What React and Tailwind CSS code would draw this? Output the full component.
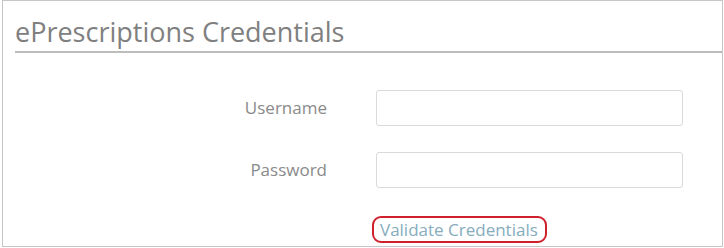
export default function App() {
  return (
    <div className="w-[724px] h-[248px] bg-white" style={{ fontFamily: '"Open Sans", sans-serif' }}>
      <div className="ml-[2px] w-[721px] h-[247px] border border-[#c6c6c6] flex flex-col">
        {/* Header */}
        <div className="ml-[12px] h-[52px] border-b-2 border-[#bdbdbd] flex items-end pb-[6px]">
          <h2 className="text-[27px] leading-none text-[#808080]">ePrescriptions Credentials</h2>
        </div>

        {/* Form */}
        <div className="flex flex-col pt-[37px]">
          <div className="flex items-center h-[36px]">
            <label className="w-[324px] text-right text-[17px] text-[#8a8a8a]">Username</label>
            <input type="text" className="ml-[49px] w-[307px] h-[36px] border border-[#d9d9d9] rounded-[3px]" />
          </div>
          <div className="flex items-center h-[36px] mt-[26px]">
            <label className="w-[324px] text-right text-[17px] text-[#8a8a8a]">Password</label>
            <input type="password" className="ml-[49px] w-[307px] h-[36px] border border-[#d9d9d9] rounded-[3px]" />
          </div>
          <div className="flex mt-[28px]">
            <a href="#" className="ml-[369px] h-[27px] pl-[6px] pr-[7px] flex items-center border-2 border-[#d0202c] rounded-[9px] text-[17px] text-[#86acbd]">
              Validate Credentials
            </a>
          </div>
        </div>
      </div>
    </div>
  );
}
